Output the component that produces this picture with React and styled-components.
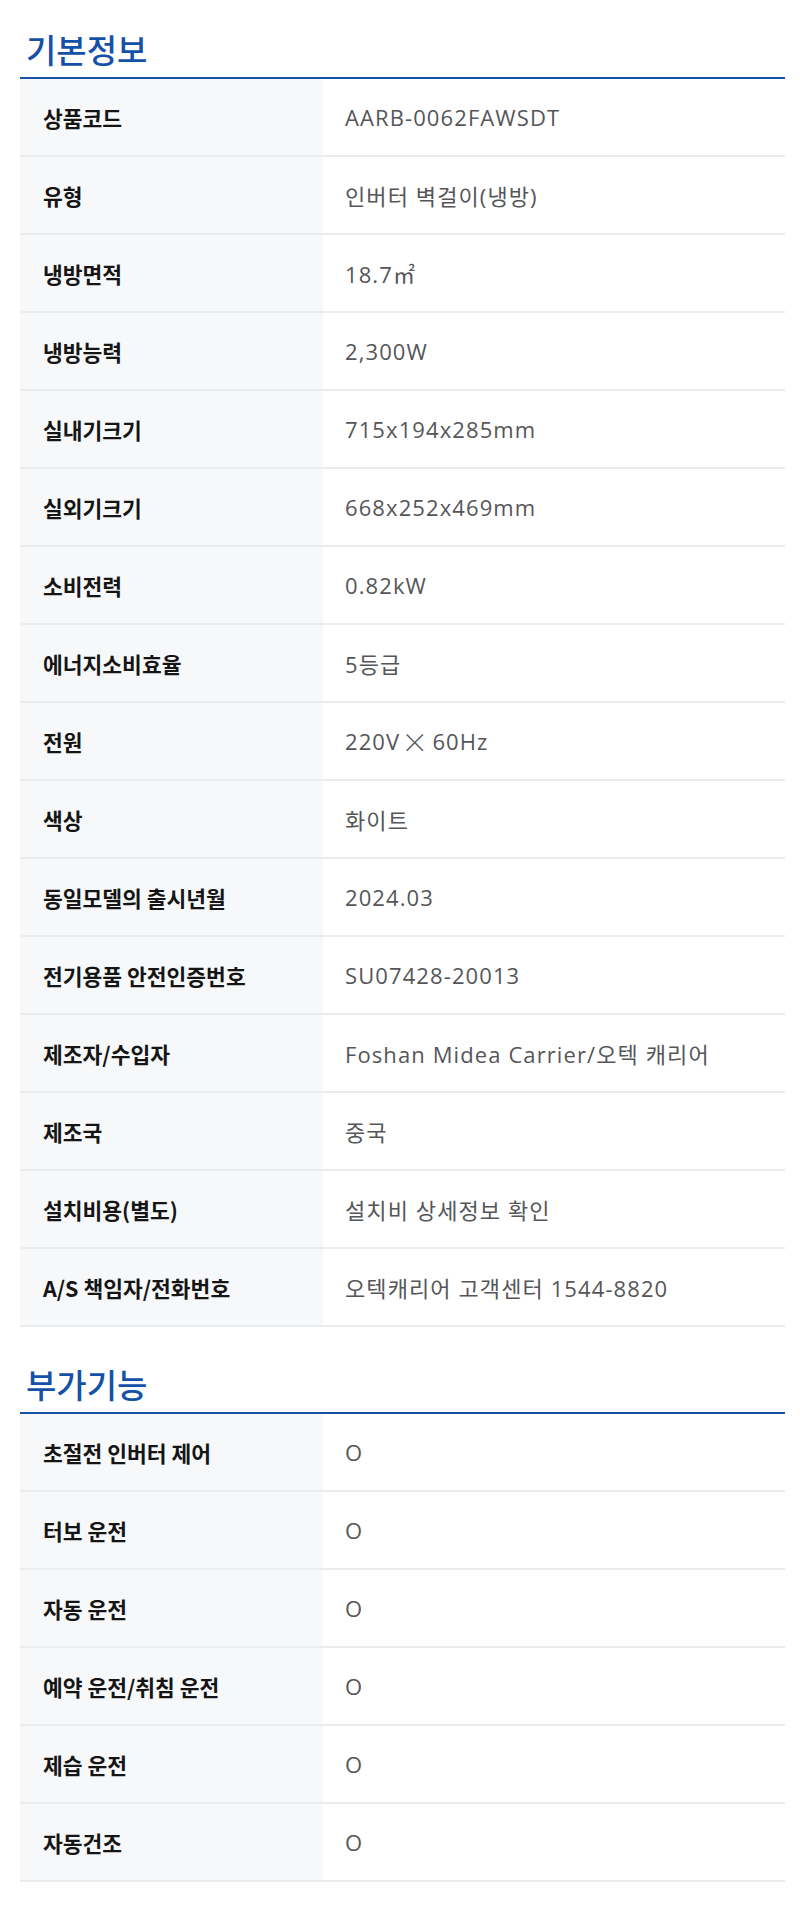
import React from 'react';
import styled, { createGlobalStyle } from 'styled-components';

const GlobalStyle = createGlobalStyle`
  body {
    margin: 0;
    background: #ffffff;
    font-family: "Noto Sans CJK KR", "Noto Sans", sans-serif;
  }
`;

const Page = styled.div`
  width: 800px;
  box-sizing: border-box;
  padding: 0 15px 43px 20px;
`;

const Section = styled.section`
  margin-top: ${(p) => (p.$first ? '0' : '8px')};
`;

const SectionTitle = styled.h2`
  margin: 0;
  height: 79px;
  box-sizing: border-box;
  display: flex;
  align-items: flex-end;
  padding: 0 0 11px 6px;
  border-bottom: 2px solid #1651a8;
  font-family: "Noto Sans CJK KR", sans-serif;
  font-size: 33px;
  font-weight: 500;
  line-height: 1;
  color: #1651a8;
`;

const Table = styled.div`
  display: flex;
  flex-direction: column;
`;

const Row = styled.div`
  display: grid;
  grid-template-columns: 303px 1fr;
  height: 78px;
  box-sizing: border-box;
  border-bottom: 2px solid #ebecee;
`;

const Label = styled.div`
  display: flex;
  align-items: center;
  padding-left: 23px;
  background: #f7f8fa;
  font-family: "Noto Sans CJK KR", sans-serif;
  font-size: 21.5px;
  font-weight: 700;
  color: #151515;
`;

const Value = styled.div`
  display: flex;
  align-items: center;
  padding-left: 22px;
  font-family: "Open Sans", "Noto Sans CJK KR", sans-serif;
  font-size: 22px;
  letter-spacing: 1.1px;
  color: #555659;
`;

// the multiplication sign is drawn wide in the original
const Times = styled.span`
  font-family: "Noto Sans CJK KR", sans-serif;
  font-size: 27px;
  font-weight: 300;
  margin: 0 3px 0 1px;
`;

const basicInfo = [
  ['상품코드', 'AARB-0062FAWSDT'],
  ['유형', '인버터 벽걸이(냉방)'],
  ['냉방면적', '18.7㎡'],
  ['냉방능력', '2,300W'],
  ['실내기크기', '715x194x285mm'],
  ['실외기크기', '668x252x469mm'],
  ['소비전력', '0.82kW'],
  ['에너지소비효율', '5등급'],
  ['전원', <>220V<Times>×</Times>60Hz</>],
  ['색상', '화이트'],
  ['동일모델의 출시년월', '2024.03'],
  ['전기용품 안전인증번호', 'SU07428-20013'],
  ['제조자/수입자', 'Foshan Midea Carrier/오텍 캐리어'],
  ['제조국', '중국'],
  ['설치비용(별도)', '설치비 상세정보 확인'],
  ['A/S 책임자/전화번호', '오텍캐리어 고객센터 1544-8820'],
];

const extraFeatures = [
  ['초절전 인버터 제어', 'O'],
  ['터보 운전', 'O'],
  ['자동 운전', 'O'],
  ['예약 운전/취침 운전', 'O'],
  ['제습 운전', 'O'],
  ['자동건조', 'O'],
];

const SpecSection = ({ title, rows, first }) => (
  <Section $first={first}>
    <SectionTitle>{title}</SectionTitle>
    <Table>
      {rows.map(([label, value]) => (
        <Row key={label}>
          <Label>{label}</Label>
          <Value>{value}</Value>
        </Row>
      ))}
    </Table>
  </Section>
);

const App = () => (
  <>
    <GlobalStyle />
    <Page>
      <SpecSection title="기본정보" rows={basicInfo} first />
      <SpecSection title="부가기능" rows={extraFeatures} />
    </Page>
  </>
);

export default App;
